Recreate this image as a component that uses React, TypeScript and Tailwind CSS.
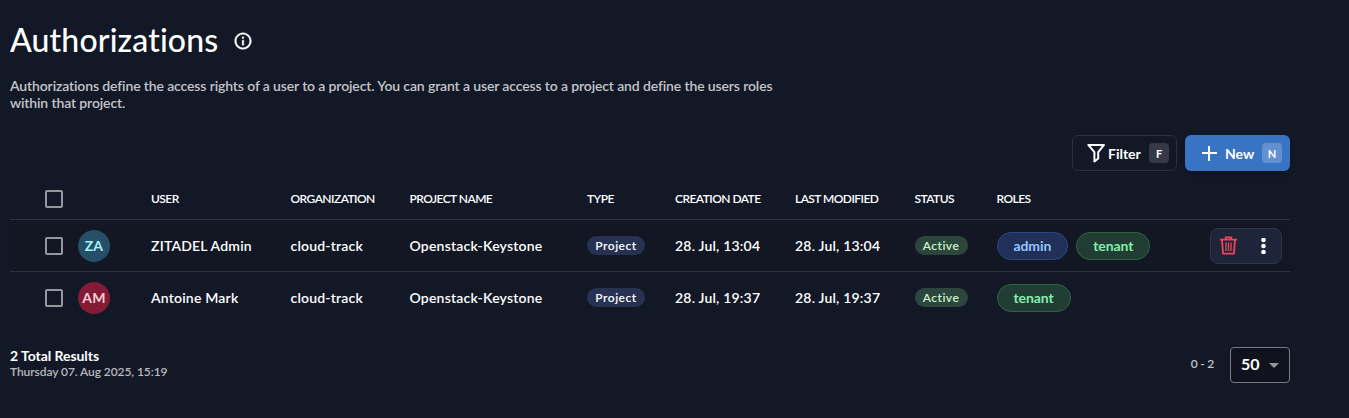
import React from "react";

const rows = [
  { initials: "ZA", avatar: "bg-[#264f67] text-[#a5f3fc]", user: "ZITADEL Admin", date: "28. Jul, 13:04", roles: ["admin", "tenant"], active: true },
  { initials: "AM", avatar: "bg-[#831b37] text-[#fecdd3]", user: "Antoine Mark", date: "28. Jul, 19:37", roles: ["tenant"], active: false },
];

const columns = "grid grid-cols-[68px_73px_139.5px_119px_177.5px_88px_120px_119.5px_82px_1fr] items-center";

function Checkbox() {
  return <span className="ml-[35px] block size-[18px] rounded-[2px] border-2 border-[#94979e]" />;
}

function Key({ children, className }: { children: React.ReactNode; className: string }) {
  return (
    <span className={`flex size-5 items-center justify-center rounded text-[11px] font-bold leading-none ${className}`}>
      {children}
    </span>
  );
}

function Role({ name }: { name: string }) {
  const color =
    name === "admin"
      ? "border-[#2c4789] bg-[#213058] text-[#93c5fd]"
      : "border-[#2b663f] bg-[#213c33] text-[#86efac]";
  return (
    <span className={`flex h-7 items-center rounded-full border px-4 text-[14px] font-bold tracking-[-0.1px] leading-none ${color}`}>
      {name}
    </span>
  );
}

function InfoIcon() {
  return (
    <svg className="size-5" viewBox="0 0 24 24" fill="currentColor" stroke="currentColor" strokeWidth="0.4">
      <path d="M11 7h2v2h-2V7zm0 4h2v6h-2v-6zm1-9C6.48 2 2 6.48 2 12s4.480 10 10 10 10-4.480 10-10S17.520 2 12 2zm0 18c-4.410 0-8-3.590-8-8s3.590-8 8-8 8 3.590 8 8-3.590 8-8 8z" />
    </svg>
  );
}

function FilterIcon() {
  return (
    <svg className="h-5 w-[19px]" viewBox="0 0 19 20" fill="none" stroke="currentColor" strokeWidth="2" strokeLinejoin="round">
      <path d="M1.300 1.900H17L11.200 9.200V15.500L7.400 18.400V9.200Z" />
    </svg>
  );
}

function TrashIcon() {
  return (
    <svg className="h-[19px] w-[17px]" viewBox="0 0 17 19" fill="none" stroke="currentColor">
      <path strokeWidth="1.800" d="M0 3.700H17M5.700 3.700V1.300H11.300V3.700M2 4L3.100 17.600H13.900L15 4" />
      <path strokeWidth="1.300" d="M6 6.500V15M8.500 6.500V15M11 6.500V15" />
    </svg>
  );
}

export default function App() {
  return (
    <main className="h-[418px] w-full overflow-hidden bg-[#131827] pl-[10px] font-['Lato',sans-serif] font-semibold text-white">
      <div className="w-[1280px]">
        <header className="flex h-[77px] items-center gap-[15px] pt-[5px]">
          <h1 className="-mt-[2px] text-[32px] font-medium leading-[40px] tracking-[0.15px]">Authorizations</h1>
          <InfoIcon />
        </header>
        <p className="w-[780px] text-[14px] leading-[17px] tracking-[-0.13px] text-[#c4c5c9]">
          Authorizations define the access rights of a user to a project. You can grant a user access to a project and define the users roles within that project.
        </p>

        <div className="mt-[24px] flex justify-end gap-2">
          <button className="flex h-9 w-[105px] items-center rounded-md border border-[#2d313f] pl-[13.5px] text-[14px] font-bold">
            <FilterIcon />
            <span className="ml-[2.5px] flex-1 text-left">Filter</span>
            <Key className="mr-[7px] bg-[#363945]">F</Key>
          </button>
          <button className="flex h-9 w-[105px] items-center rounded-md bg-[#3973c4] pl-[17px] text-[14px] font-bold shadow-md">
            <svg className="size-[15px]" viewBox="0 0 15 15" stroke="currentColor" strokeWidth="2">
              <path d="M0 7H15M7 0V15" />
            </svg>
            <span className="ml-[8px] flex-1 text-left">New</span>
            <Key className="mr-[8px] bg-[#648fd0]">N</Key>
          </button>
        </div>

        <section className="mt-2">
          <div className={`${columns} h-10 text-[12px] tracking-[-0.55px]`}>
            <Checkbox />
            <span />
            <span>USER</span>
            <span>ORGANIZATION</span>
            <span>PROJECT NAME</span>
            <span>TYPE</span>
            <span>CREATION DATE</span>
            <span>LAST MODIFIED</span>
            <span>STATUS</span>
            <span>ROLES</span>
          </div>
          {rows.map((row) => (
            <div
              key={row.initials}
              className={`${columns} h-[52px] border-t border-[#2e3341] text-[14px] font-semibold tracking-[0.2px] ${row.active ? "bg-[#121723]" : ""}`}
            >
              <Checkbox />
              <span className={`flex size-8 items-center justify-center rounded-full text-[14px] font-bold ${row.avatar}`}>{row.initials}</span>
              <span>{row.user}</span>
              <span>cloud-track</span>
              <span>Openstack-Keystone</span>
              <span>
                <span className="flex h-[19px] w-[58px] items-center justify-center rounded-full bg-[#273152] text-[12px] tracking-[0.5px]">Project</span>
              </span>
              <span>{row.date}</span>
              <span>{row.date}</span>
              <span>
                <span className="flex h-[19px] w-[53px] items-center justify-center rounded-full bg-[#2d463d] text-[12px] tracking-[0.5px] text-[#cbf4c9]">Active</span>
              </span>
              <div className="flex items-center justify-between pr-2">
                <div className="flex gap-2">
                  {row.roles.map((role) => <Role key={role} name={role} />)}
                </div>
                {row.active && (
                  <div className="flex h-9 w-[72px] items-center rounded-lg border border-[#30364a] bg-[#1e243a] pl-[9px]">
                    <span className="text-[#f0445a]"><TrashIcon /></span>
                    <svg className="ml-[24px] h-4 w-[5px]" viewBox="0 0 5 16" fill="currentColor">
                      <circle cx="2.500" cy="2" r="2.300" />
                      <circle cx="2.500" cy="8" r="2.300" />
                      <circle cx="2.500" cy="14" r="2.300" />
                    </svg>
                  </div>
                )}
              </div>
            </div>
          ))}
        </section>

        <footer className="mt-[24px] flex items-start justify-between">
          <div>
            <div className="text-[14px] font-bold leading-[17px] tracking-[-0.05px]">2 Total Results</div>
            <div className="pt-px text-[12px] leading-[14px] tracking-[-0.08px] text-[#b8babe]">Thursday 07. Aug 2025, 15:19</div>
          </div>
          <div className="flex items-center gap-[16px]">
            <span className="pb-0.5 text-[12px] tracking-[-0.2px] text-[#c4c5c9]">0 - 2</span>
            <button className="flex h-9 w-[60px] items-center justify-between rounded border border-[#777a82] bg-[#10131d] pl-[10px] pr-[10px] text-[16px] font-bold">
              <span className="-mt-0.5">50</span>
              <svg className="h-[5px] w-[10px]" viewBox="0 0 10 5" fill="#94979e"><path d="M0 0H10L5 5Z" /></svg>
            </button>
          </div>
        </footer>
      </div>
    </main>
  );
}
